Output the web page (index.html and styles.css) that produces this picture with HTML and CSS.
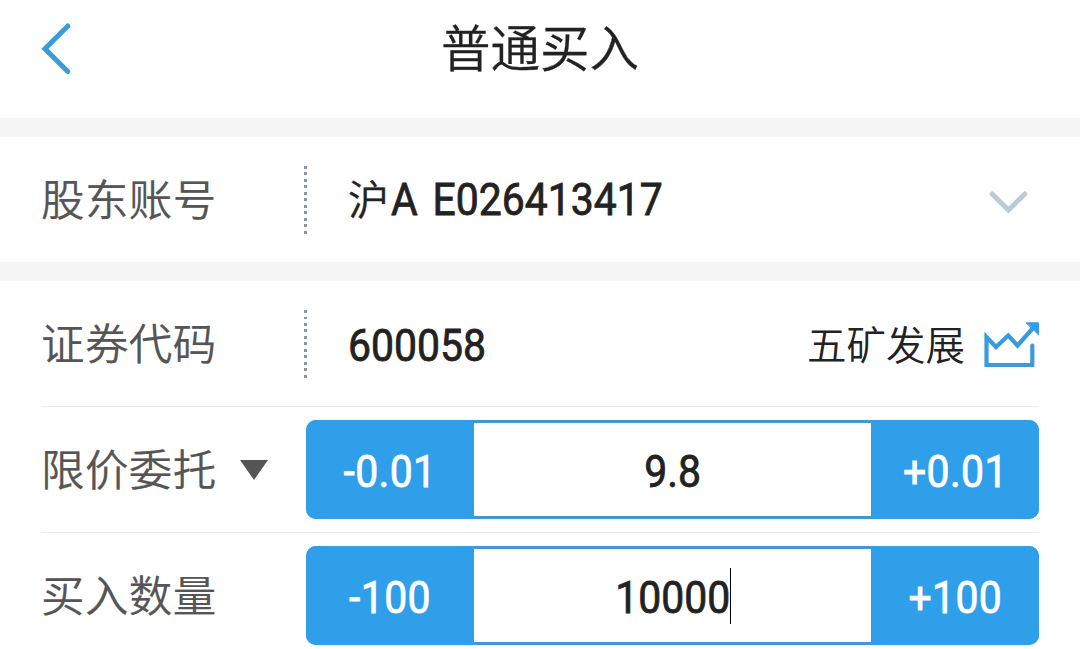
FILE: index.html
```html
<!DOCTYPE html>
<html lang="zh-CN">
<head>
    <meta charset="UTF-8">
    <meta name="viewport" content="width=device-width, initial-scale=1.0">
    <title>普通买入</title>
    <link rel="stylesheet" href="styles.css">
</head>
<body>

    <header class="header">
        <svg class="back" width="32" height="52" viewBox="0 0 32 52"><path d="M27.8 3 L5 25.7 L27.8 48.5"/></svg>
        <h1 class="title">普通买入</h1>
    </header>

    <!-- Account -->
    <section class="row account">
        <span class="label"><span class="cjk">股东账号</span></span>
        <span class="divider"></span>
        <span class="value"><span class="hu">沪</span><span class="num">A E026413417</span></span>
        <svg class="chevron" width="40" height="26" viewBox="0 0 40 26"><path d="M4.2 7 L20.4 23 L36.8 7"/></svg>
    </section>

    <!-- Order form -->
    <section class="order">
        <div class="row code">
            <span class="label"><span class="cjk">证券代码</span></span>
            <span class="divider"></span>
            <span class="value"><span class="num">600058</span></span>
            <span class="stock">五矿发展</span>
            <svg class="chart" width="56" height="48" viewBox="0 0 56 48">
                <path d="M49.3 25.5 V45 H3.5 V17 L13 27 L25.3 15.5 L34.5 25.5 L50 8"/>
                <path class="arrow" d="M43.5 2.8 H55.5 V14.5 Z"/>
            </svg>
        </div>
        <div class="row field">
            <span class="label"><span class="cjk">限价委托</span><svg class="caret" width="28" height="20" viewBox="0 0 28 20"><path d="M0 0 H28 L14 20 Z"/></svg></span>
            <div class="stepper">
                <button class="step"><span class="num">-0.01</span></button>
                <div class="input"><span class="num">9.8</span></div>
                <button class="step"><span class="num">+0.01</span></button>
            </div>
        </div>
        <div class="row field">
            <span class="label"><span class="cjk">买入数量</span></span>
            <div class="stepper">
                <button class="step"><span class="num">-100</span></button>
                <div class="input"><span class="num">10000</span><span class="cursor"></span></div>
                <button class="step"><span class="num">+100</span></button>
            </div>
        </div>
    </section>

</body>
</html>
```

FILE: styles.css
```css
* {
    box-sizing: border-box;
}
body {
    margin: 0;
    height: 649px;
    overflow: hidden;
    background: #fff;
    color: #222;
    font-family: Roboto, "Noto Sans CJK SC", sans-serif;
}
.header {
    display: grid;
    grid-template-columns: 60px 1fr 60px;
    align-items: center;
    height: 118px;
    padding: 0 40px 20px;
}
.back, .chevron, .chart {
    fill: none;
    stroke: #3a9bdc;
    stroke-width: 5;
    stroke-linecap: round;
    overflow: visible;
}
.title {
    margin: 0;
    padding-top: 2px;
    text-align: center;
    font-size: 49.5px;
    font-weight: 350;
    line-height: 60px;
    -webkit-text-stroke: 0.3px;
}
.row {
    display: flex;
    align-items: center;
}
.account {
    height: 163px;
    padding: 0 52px 0 41px;
    border-top: 19px solid #f5f5f5;
    border-bottom: 19px solid #f5f5f5;
}
.label {
    display: flex;
    align-items: center;
    width: 263px;
    flex: none;
    color: #555;
    font-size: 43.5px;
    font-weight: 350;
    line-height: 60px;
}
.cjk {
    padding-top: 4px;
    letter-spacing: 0.4px;
    -webkit-text-stroke: 0.2px;
}
.divider {
    width: 3px;
    height: 68px;
    background: repeating-linear-gradient(#8797a0 0 2.8px, #fff 2.8px 6.5px);
}
.value {
    display: flex;
    align-items: center;
    flex: 1;
    margin-left: 41px;
}
.hu {
    margin: -6px 2px 0 0;
    font-size: 41px;
    font-weight: 350;
    -webkit-text-stroke: 0.4px;
}
/* narrow figures */
.num {
    display: inline-block;
    font-size: 44px;
    font-weight: 400;
    word-spacing: 5px;
    -webkit-text-stroke: 0.8px;
    transform: scaleX(0.93);
}
.value .num {
    transform-origin: left;
}
.chevron {
    stroke: #b9cad8;
    stroke-width: 5;
}
.order {
    padding: 0 41px;
}
.code {
    height: 125px;
}
.code .num, .stepper .num {
    padding-top: 5px;
}
.step .num {
    letter-spacing: 0.4px;
}
.stock {
    margin: -3px 18px 0 0;
    font-size: 39.5px;
    font-weight: 350;
}
.chart {
    stroke-width: 4.2;
}
.chart .arrow {
    fill: #309fea;
    stroke: #309fea;
    stroke-width: 1;
}
.field {
    height: 126px;
    border-top: 1px solid #eaeaea;
}
.caret {
    margin-left: 23px;
    fill: #555;
}
.stepper {
    display: grid;
    grid-template-columns: 168px 1fr 168px;
    flex: 1;
    margin-left: 2px;
    height: 99px;
    border-radius: 10px;
    background: #3f98d8;
    overflow: hidden;
}
.step {
    padding: 0;
    border: 0;
    background: #309fea;
    color: #fff;
    font-family: inherit;
}
.input {
    display: flex;
    align-items: center;
    justify-content: center;
    margin: 3px 0;
    background: #fff;
}
.cursor {
    width: 1px;
    height: 56px;
    margin: 0 3px 0 -4px;
    background: #000;
}
```
